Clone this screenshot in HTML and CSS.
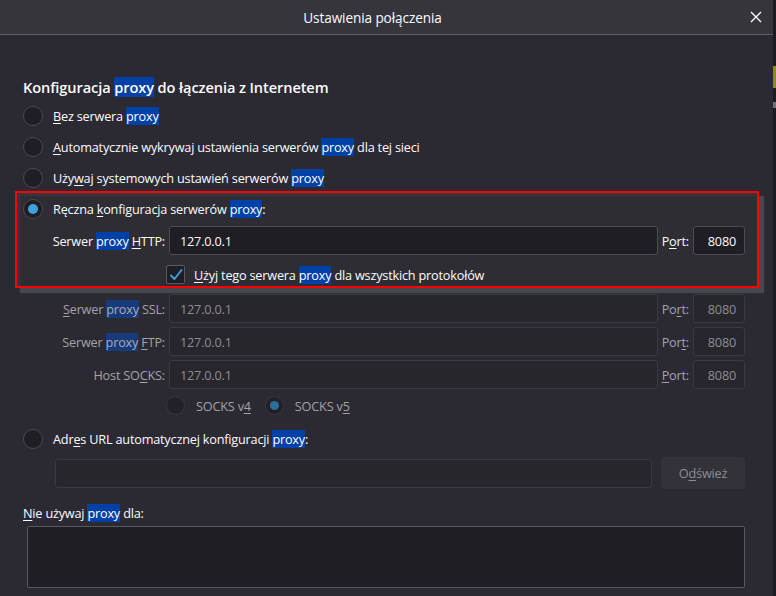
FILE: index.html
```html
<!DOCTYPE html>
<html lang="pl">
<head>
<meta charset="utf-8">
<title>Ustawienia połączenia</title>
<link rel="stylesheet" href="styles.css">
</head>
<body>
<div class="screen">
  <div class="dialog">
    <header class="titlebar">
      <span class="title">Ustawienia połączenia</span>
      <span class="close" aria-label="Zamknij">
        <svg width="12" height="12" viewBox="0 0 12 12"><path d="M1 1 L11 11 M11 1 L1 11" stroke="#fbfbfe" stroke-width="1.4" fill="none"/></svg>
      </span>
    </header>
    <main class="content">
      <h1 class="heading">Konfiguracja <span class="hl">proxy</span> do łączenia z Internetem</h1>
      <div class="radio-row"><span class="radio"></span><span><u>B</u>ez serwera <span class="hl">proxy</span></span></div>
      <div class="radio-row"><span class="radio"></span><span><u>A</u>utomatycznie wykrywaj ustawienia serwerów <span class="hl">proxy</span> dla tej sieci</span></div>
      <div class="radio-row"><span class="radio"></span><span>Uży<u>w</u>aj systemowych ustawień serwerów <span class="hl">proxy</span></span></div>

      <section class="manual">
        <div class="radio-row"><span class="radio checked"></span><span>Ręczna <u>k</u>onfiguracja serwerów <span class="hl">proxy</span>:</span></div>
        <div class="proxy-grid">
          <span class="field-label">Serwer <span class="hl">proxy</span> <u>H</u>TTP:</span>
          <span class="input">127.0.0.1</span>
          <span class="port-label">P<u>o</u>rt:</span>
          <span class="input port">8080</span>
          <div class="check-row">
            <span class="checkbox"><svg width="14" height="14" viewBox="0 0 14 14"><path d="M2 7.5 L5.5 11 L12.5 2" stroke="#3fa3e3" stroke-width="1.8" fill="none" stroke-linecap="round" stroke-linejoin="round"/></svg></span>
            <span><u>U</u>żyj tego serwera <span class="hl">proxy</span> dla wszystkich protokołów</span>
          </div>
        </div>
      </section>

      <div class="proxy-grid disabled">
        <span class="field-label"><u>S</u>erwer <span class="hl">proxy</span> SSL:</span>
        <span class="input">127.0.0.1</span>
        <span class="port-label">Po<u>r</u>t:</span>
        <span class="input port">8080</span>

        <span class="field-label">Serwer <span class="hl">proxy</span> <u>F</u>TP:</span>
        <span class="input">127.0.0.1</span>
        <span class="port-label">Por<u>t</u>:</span>
        <span class="input port">8080</span>

        <span class="field-label">Host SO<u>C</u>KS:</span>
        <span class="input">127.0.0.1</span>
        <span class="port-label"><u>P</u>ort:</span>
        <span class="input port">8080</span>

        <div class="socks-row">
          <span class="socks-opt"><span class="radio small"></span><span>SOCKS v<u>4</u></span></span>
          <span class="socks-opt"><span class="radio small checked"></span><span>SOCKS v<u>5</u></span></span>
        </div>
      </div>

      <div class="radio-row auto"><span class="radio"></span><span>Adr<u>e</u>s URL automatycznej konfiguracji <span class="hl">proxy</span>:</span></div>
      <div class="url-row">
        <span class="input url"></span>
        <span class="button">O<u>d</u>śwież</span>
      </div>

      <div class="noproxy-label"><u>N</u>ie używaj <span class="hl">proxy</span> dla:</div>
      <div class="textarea"></div>
    </main>
  </div>
  <div class="edge"><span class="edge-mark"></span><span class="edge-mark2"></span></div>
</div>
</body>
</html>
```
FILE: styles.css
```css
* { box-sizing: border-box; }
html, body { margin: 0; padding: 0; }
body {
  background: #2b2a33;
  color: #fbfbfe;
  font-family: "Open Sans", "Noto Sans", sans-serif;
  font-size: 12.7px;
  letter-spacing: -0.2px;
  width: 776px;
  height: 596px;
  overflow: hidden;
}
u { text-decoration: underline; text-underline-offset: 2px; text-decoration-thickness: 1px; }
.screen { display: flex; height: 596px; }
.dialog { flex: 1; display: flex; flex-direction: column; background: #2b2a33; }
.edge { width: 3px; background: #1c1b22; display: flex; flex-direction: column; }
.edge-mark { display: block; height: 22px; margin-top: 66px; background: #8b8b22; }
.edge-mark2 { display: block; height: 6px; margin-top: 14px; background: #6f7078; }

.titlebar {
  height: 35px;
  background: #36353b;
  border-bottom: 1px solid #5f5e64;
  display: flex;
  align-items: center;
  justify-content: center;
  padding-right: 28px;
  position: relative;
}
.title { font-size: 13.6px; color: #fbfbfe; letter-spacing: -0.1px; }
.close { position: absolute; right: 11px; top: 11px; width: 12px; height: 12px; display: flex; }

.content { padding: 42px 28px 0 23px; display: flex; flex-direction: column; }
.heading { margin: 0; font-size: 14.6px; font-weight: 600; line-height: 20px; height: 20px; letter-spacing: -0.1px; }
.hl { background: #0041a9; color: #fff; }
.heading + .radio-row { margin-top: 3px; }

.radio-row { display: flex; align-items: center; height: 31px; gap: 10px; }
.radio {
  width: 20px; height: 20px; border-radius: 50%;
  background: #1f1e25; border: 1px solid #4b4a52;
  display: flex; align-items: center; justify-content: center; flex: none;
}
.radio.checked::after { content: ""; width: 10px; height: 10px; border-radius: 50%; background: #3ea1de; }
.radio.small { width: 19px; height: 19px; }

.manual {
  margin: -2px -14px 0 -8px;
  border: 2px solid #ff0000;
  background: #2e2d34;
  padding: 0 12px 2px 6px;
  box-shadow: 5px 5px 1px rgba(95, 94, 100, 0.55), inset 3px 3px 3px rgba(255,255,255,0.05);
}

.proxy-grid {
  display: grid;
  grid-template-columns: 126px 1fr auto 52px;
  column-gap: 4px;
  row-gap: 4px;
  margin-left: 16px;
  align-items: center;
}
.manual .proxy-grid { margin-top: 2px; }
.field-label { justify-self: end; white-space: nowrap; }
.port-label { white-space: nowrap; }
.input {
  height: 29px; border: 1px solid #4d4c53; border-radius: 3px;
  background: #1f1e24; display: flex; align-items: center; padding: 0 10px;
  color: #fbfbfe;
}
.input.port { justify-content: flex-end; padding: 0 8px; }
.check-row { grid-column: 2 / 5; display: flex; align-items: center; gap: 9px; margin: 6px 0 0 -3px; }
.checkbox {
  width: 19px; height: 19px; border: 1px solid #5a5960; border-radius: 2px;
  background: #1f1e24; display: flex; align-items: center; justify-content: center;
}

.disabled { margin-top: 6px; color: #a3a2a8; }
.disabled .hl { background: #173a7a; color: #a8abb8; }
.disabled .input { color: #8e8d93; background: #27262d; border-color: #3b3a41; }
.socks-row { grid-column: 2 / 5; display: flex; gap: 14px; margin: 3px 0 0 -3px; height: 19px; }
.socks-opt { display: flex; align-items: center; gap: 11px; }
.socks-row .radio { background: #222128; border-color: #38373e; }
.socks-row .radio.checked::after { background: #296f9c; width: 9px; height: 9px; }

.radio-row.auto { margin-top: 8px; }
.url-row { display: flex; gap: 9px; align-items: center; margin: 3px 0 0 32px; }
.input.url { flex: 1; height: 29px; background: #27262d; border-color: #3b3a41; }
.button {
  width: 84px; height: 32px; border-radius: 4px; background: #333239;
  color: #8e8d93; display: flex; align-items: center; justify-content: center;
}
.noproxy-label { margin-top: 14px; line-height: 20px; }
.textarea {
  margin: 3px 0 0 4px; height: 62px; border: 1px solid #59585f; border-radius: 2px;
  background: #1f1e24;
}
```
